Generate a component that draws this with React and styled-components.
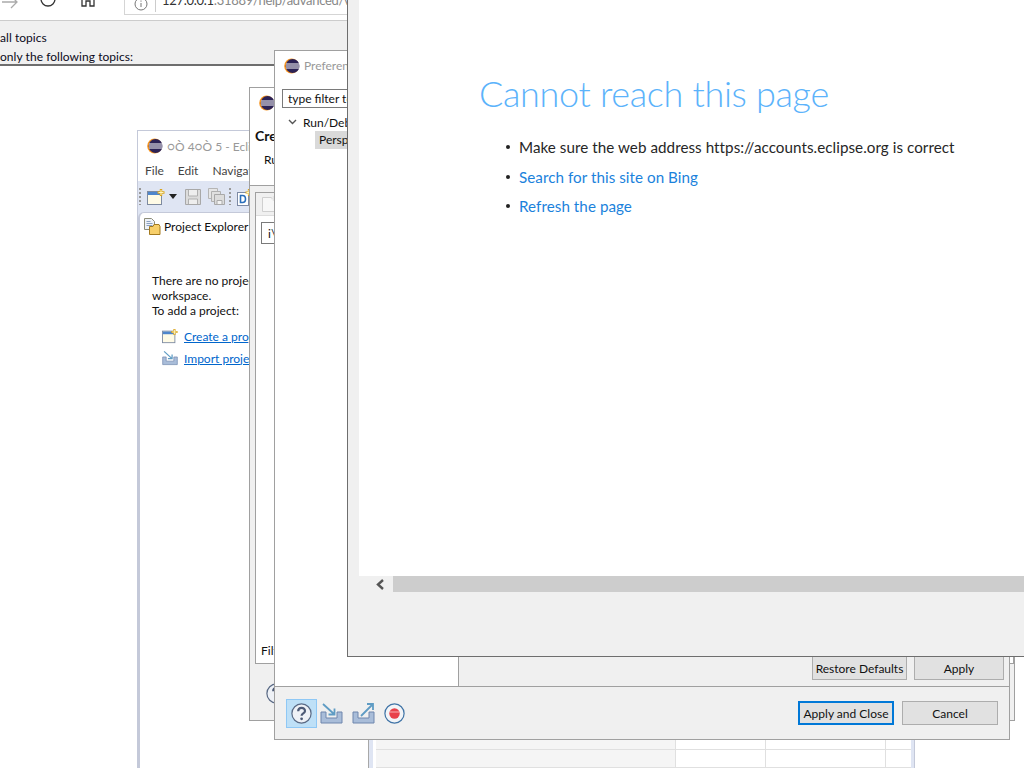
import React from "react";
import styled, { createGlobalStyle } from "styled-components";

const Global = createGlobalStyle`
  html, body { margin: 0; padding: 0; background: #fff; }
  body { font-family: "Lato", "Liberation Sans", sans-serif; font-size: 12px; color: #111; }
  * { box-sizing: border-box; }
`;

const Desktop = styled.div`
  position: relative;
  width: 1024px;
  height: 768px;
  overflow: hidden;
  background: #fff;
`;

const Window = styled.div`
  position: absolute;
  left: ${(p) => p.$x}px;
  top: ${(p) => p.$y}px;
  width: ${(p) => p.$w}px;
  height: ${(p) => p.$h}px;
  display: flex;
  flex-direction: column;
  overflow: hidden;
  background: ${(p) => p.$bg || "#fff"};
  border: 1px solid ${(p) => p.$border || "#a0a0a0"};
`;

/* Browser */
const BrowserWindow = styled(Window)`
  border: none;
`;
const BrowserBar = styled.div`
  height: 21px;
  flex: none;
  display: flex;
  align-items: flex-end;
  background: #fff;
  border-bottom: 1px solid #ccc;
  position: relative;
  padding-left: 124px;
`;
const NavIcon = styled.svg`
  position: absolute;
  left: ${(p) => p.$x}px;
  top: -9px;
`;
const UrlBox = styled.div`
  width: 240px;
  height: 26px;
  margin-bottom: 5px;
  border: 1px solid #d5d5d5;
  display: flex;
  align-items: flex-end;
  flex: none;
  background: #fff;
  white-space: pre;
  padding: 0 0 6px 37px;
  font-size: 13px;
  letter-spacing: -0.3px;
  color: #888;
  position: relative;
`;
const UrlSep = styled.span`
  position: absolute;
  left: 30px;
  bottom: 2px;
  height: 22px;
  width: 1px;
  background: #ccc;
`;
const UrlInfo = styled.svg`
  position: absolute;
  left: 9px;
  bottom: 3px;
`;
const UrlHost = styled.span`
  color: #333;
`;
const TopicBand = styled.div`
  height: 45px;
  flex: none;
  background: #f0f0f0;
  border-bottom: 2px solid #6e6e6e;
  display: flex;
  flex-direction: column;
  padding: 9px 0 0 0;
  gap: 4px;
  line-height: 15px;
  font-size: 12px;
  letter-spacing: 0.05px;
  color: #0b0b20;
`;

/* Eclipse */
const TitleBar = styled.div`
  height: ${(p) => p.$h || 30}px;
  flex: none;
  display: flex;
  align-items: center;
  gap: 4px;
  padding-left: 9px;
  background: #fff;
  color: #999;
  white-space: nowrap;
  font-size: 12px;
`;
const MenuBar = styled.div`
  height: 20px;
  flex: none;
  display: flex;
  gap: 14px;
  align-items: center;
  padding: 0 0 2px 7px;
  color: #444;
  font-size: 12px;
  background: #fff;
`;
const ToolBar = styled.div`
  height: 31px;
  flex: none;
  background: #dfe5f3;
  display: flex;
  align-items: center;
  padding-left: 1px;
`;
const ToolSlot = styled.span`
  display: flex;
  align-items: center;
  margin-right: ${(p) => p.$mr}px;
`;
const Grip = styled.span`
  width: 2px;
  height: 17px;
  background: repeating-linear-gradient(#999 0 2px, transparent 2px 4px);
`;
const EclipseBody = styled.div`
  flex: 1;
  display: flex;
  background: #dfe5f3;
  padding-right: 3px;
`;
const Explorer = styled.div`
  width: 231px;
  flex: none;
  background: #fff;
  border-left: 2px solid #c4c9d9;
  border-top: 1px solid #c4c9d9;
  border-right: 1px solid #a8a8a8;
  border-top-left-radius: 6px;
  display: flex;
  flex-direction: column;
`;
const ExplorerTab = styled.div`
  display: flex;
  align-items: center;
  gap: 3px;
  height: 28px;
  padding: 0 0 2px 4px;
  color: #111;
  white-space: nowrap;
`;
const ExplorerText = styled.div`
  margin: 32px 0 0 12px;
  line-height: 15px;
  color: #111;
  white-space: nowrap;
`;
const LinkRow = styled.div`
  display: flex;
  align-items: center;
  gap: 6px;
  height: 22px;
  padding-left: 22px;
  white-space: nowrap;
  color: #0066cc;
  text-decoration: underline;
`;
const Links = styled.div`
  margin-top: 7px;
`;
const Workbench = styled.div`
  flex: 1;
  background: #fff;
  margin: 0 0 0 4px;
  padding: 0 0 0 3px;
  display: flex;
  flex-direction: column;
  justify-content: flex-end;
`;
const SheetRow = styled.div`
  height: 18px;
  display: grid;
  grid-template-columns: 300px 90px 120px 1fr;
  border-top: 1px solid #e0e0e0;
`;
const SheetCell = styled.span`
  border-right: 1px solid #e0e0e0;
  background: ${(p) => (p.$shade ? "#f5f5f5" : "transparent")};
`;

/* Create dialog */
const CreateHead = styled.div`
  height: 68px;
  flex: none;
  background: #fff;
  padding: 10px 0 0 5px;
  border-bottom: 1px solid #a0a0a0;
`;
const CreateTitle = styled.div`
  font-weight: 700;
  font-size: 14px;
  line-height: 16px;
`;
const CreateSub = styled.div`
  margin: 8px 0 0 9px;
  line-height: 15px;
`;
const CreateBody = styled.div`
  flex: 1;
  background: #f0f0f0;
  padding: 6px 0 0 5px;
  display: flex;
  flex-direction: column;
`;
const CreatePanel = styled.div`
  height: 472px;
  flex: none;
  background: #fff;
  border: 1px solid #a0a0a0;
  display: flex;
  flex-direction: column;
`;
const CreateTools = styled.div`
  height: 23px;
  flex: none;
  background: #f0f0f0;
  border-bottom: 1px solid #ddd;
  display: flex;
  align-items: center;
  padding-left: 6px;
`;
const CreateInput = styled.div`
  margin: 6px 0 0 5px;
  width: 200px;
  height: 22px;
  border: 1px solid #7a7a7a;
  padding: 3px 0 0 6px;
  line-height: 15px;
`;
const FilterLabel = styled.div`
  margin: auto 0 5px 5px;
  line-height: 15px;
`;
const CreateFoot = styled.div`
  flex: 1;
  padding: 19px 0 0 11px;
`;

/* Preferences */
const PrefMain = styled.div`
  flex: 1;
  display: flex;
  background: #fff;
`;
const PrefSide = styled.div`
  width: 184px;
  flex: none;
  background: #fff;
  border-right: 1px solid #a0a0a0;
  padding: 9px 0 0 7px;
  display: flex;
  flex-direction: column;
`;
const FilterInput = styled.div`
  width: 170px;
  height: 19px;
  border: 1px solid #7a7a7a;
  padding-left: 5px;
  line-height: 17px;
  white-space: nowrap;
  flex: none;
`;
const TreeRow = styled.div`
  display: flex;
  align-items: center;
  gap: 6px;
  height: 18px;
  margin-top: 5px;
  padding-left: 6px;
  white-space: nowrap;
`;
const TreeChild = styled.div`
  height: 18px;
  margin: 0 0 0 33px;
  background: #d9d9d9;
  padding-left: 4px;
  line-height: 18px;
  white-space: nowrap;
`;
const PrefContent = styled.div`
  flex: 1;
  background: #f0f0f0;
  display: flex;
  justify-content: flex-end;
  align-items: flex-end;
  gap: 7px;
  padding: 0 5px 6px 0;
`;
const FlatButton = styled.button`
  font: inherit;
  font-size: 12px;
  height: 24px;
  width: ${(p) => p.$w}px;
  padding: 0;
  background: #e1e1e1;
  color: #111;
  border: ${(p) => (p.$primary ? "2px solid #0078d7" : "1px solid #adadad")};
`;
const PrefFoot = styled.div`
  height: 53px;
  flex: none;
  background: #f0f0f0;
  border-top: 1px solid #a0a0a0;
  display: flex;
  align-items: center;
  padding: 0 11px 0 11px;
`;
const HelpButton = styled.div`
  width: 31px;
  height: 29px;
  background: #bee0f7;
  border: 1px solid #8fc8f5;
  display: flex;
  align-items: center;
  justify-content: center;
  flex: none;
`;
const FootIcons = styled.div`
  display: flex;
  align-items: center;
  gap: 9px;
  margin-left: 3px;
`;
const FootButtons = styled.div`
  margin-left: auto;
  display: flex;
  gap: 8px;
`;

/* Web dialog */
const WebWindow = styled(Window)`
  border: 1px solid #6e6e6e;
  padding: 0 0 0 11px;
`;
const WebPage = styled.div`
  height: 576px;
  flex: none;
  background: #fff;
  padding: 69px 0 0 120px;
`;
const Heading = styled.h1`
  margin: 0;
  font-size: 36px;
  font-weight: 300;
  line-height: 48px;
  letter-spacing: -0.33px;
  color: #5cb3fb;
  white-space: nowrap;
`;
const IssueList = styled.ul`
  list-style: none;
  margin: 19px 0 0;
  padding: 0 0 0 40px;
  font-size: 15.2px;
  line-height: 22px;
  letter-spacing: 0.05px;
  display: flex;
  flex-direction: column;
  gap: 7.5px;
`;
const Issue = styled.li`
  position: relative;
  white-space: nowrap;
  color: ${(p) => (p.$link ? "#1b82dc" : "#262626")};
  &::before {
    content: "";
    position: absolute;
    left: -13px;
    top: 9px;
    width: 4px;
    height: 4px;
    border-radius: 50%;
    background: #222;
  }
`;
const ScrollBar = styled.div`
  height: 16px;
  flex: none;
  display: flex;
  align-items: stretch;
`;
const ScrollArrow = styled.div`
  width: 34px;
  flex: none;
  display: flex;
  align-items: center;
  justify-content: flex-end;
  padding-right: 8px;
`;
const ScrollThumb = styled.div`
  flex: 1;
  background: #cdcdcd;
`;

const Logo = ({ s = 16 }) => (
  <svg width={s} height={s} viewBox="0 0 16 16">
    <circle cx="7.6" cy="8" r="7.4" fill="#f7941e" />
    <circle cx="8.6" cy="8" r="6.9" fill="#2c2255" />
    <path d="M2 6h13M2 8h13.4M2 10h13" stroke="#fff" strokeWidth="1" />
  </svg>
);
const NewProject = ({ s = 18 }) => (
  <svg width={s} height={s} viewBox="0 0 18 18">
    <rect x="0.5" y="3.5" width="14" height="13" fill="#fffbe6" stroke="#7d8aa0" />
    <rect x="1" y="4" width="13" height="3" fill="#4f86cc" />
    <path d="M14 1v7M10.5 4.5h7" stroke="#d9a520" strokeWidth="2.4" />
    <path d="M14 2v5M11.5 4.5h5" stroke="#fff5c0" strokeWidth="1" />
  </svg>
);
const Floppy = () => (
  <svg width="16" height="17" viewBox="0 0 16 17">
    <path d="M.5 1.5h15v15H.5z" fill="#dcdcdc" stroke="#a8a8a8" />
    <path d="M3.5 2v6h9V2M3.5 16v-5h9v5" fill="#eee" stroke="#b0b0b0" />
  </svg>
);
const FloppyAll = () => (
  <svg width="17" height="17" viewBox="0 0 17 17">
    <path d="M.5.5h9v10h-9z" fill="#e6e6e6" stroke="#b5b5b5" />
    <path d="M3.5 3.5h9v10h-9z" fill="#e0e0e0" stroke="#b0b0b0" />
    <path d="M6.5 6.5h10v10h-10z" fill="#dcdcdc" stroke="#a8a8a8" />
    <path d="M9 12.5h5v4H9z" fill="#f2f2f2" stroke="#aaa" />
  </svg>
);
const NewType = () => (
  <svg width="18" height="18" viewBox="0 0 18 18">
    <rect x="0.5" y="4.5" width="11" height="13" fill="#fff" stroke="#7d8aa5" />
    <path d="M3.5 7.5v7h2c4 0 4-7 0-7z" fill="none" stroke="#2a6ebb" strokeWidth="1.6" />
    <path d="M12 1v7M8.5 4.5h7" stroke="#d9a520" strokeWidth="2.2" />
    <path d="M12 2v5M9.5 4.5h5" stroke="#fff5c0" strokeWidth="1" />
  </svg>
);
const Folder = () => (
  <svg width="17" height="17" viewBox="0 0 17 17">
    <path d="M.5.5h7l3 3v8H.5z" fill="#eef2f8" stroke="#8d8d7a" />
    <path d="M2.5 3.5h4M2.5 5.5h6M2.5 7.5h6" stroke="#8aa0c0" />
    <path d="M5.5 8.5h3.5l1-2h5l1 2v8h-10.500z" fill="#f7cf6a" stroke="#a37a1f" />
  </svg>
);
const TrayIn = ({ w = 23 }) => (
  <svg width={w} height={w} viewBox="0 0 23 23">
    <path d="M1 10v11h21V10h-5v6H6v-6z" fill="#a9bdd9" stroke="#6f86ad" />
    <path d="M3 2l11 10M14.500 6.500v6h-6" fill="none" stroke="#5f9cc4" strokeWidth="1.8" />
  </svg>
);
const TrayOut = ({ w = 23 }) => (
  <svg width={w} height={w} viewBox="0 0 23 23">
    <path d="M1 10v11h21V10h-5v6H6v-6z" fill="#a9bdd9" stroke="#6f86ad" />
    <path d="M9 14L21 2M15 2h6v6" fill="none" stroke="#5f9cc4" strokeWidth="1.8" />
  </svg>
);
const Help = ({ s = 21 }) => (
  <svg width={s} height={s} viewBox="0 0 21 21">
    <circle cx="10.500" cy="10.500" r="9.600" fill="#eef1f6" stroke="#5a6a85" strokeWidth="1.200" />
    <path d="M7.200 8.200c0-4.400 6.800-4.400 6.800-.2 0 2.500-3.400 2.400-3.400 4.800" fill="none" stroke="#4d5a76" strokeWidth="2.200" />
    <circle cx="10.600" cy="15.800" r="1.400" fill="#4d5a76" />
  </svg>
);
const Record = () => (
  <svg width="21" height="21" viewBox="0 0 21 21">
    <circle cx="10.500" cy="10.500" r="9.600" fill="#f2f4f7" stroke="#3f73a6" strokeWidth="1.200" />
    <circle cx="10.500" cy="10.500" r="5.200" fill="#e8414a" />
    <path d="M6 9h9" stroke="#f58b90" strokeWidth="1.500" />
  </svg>
);

const rows = [0, 1, 2];

export default function App() {
  return (
    <Desktop>
      <Global />
      <BrowserWindow $x={0} $y={0} $w={347} $h={300}>
        <BrowserBar>
          <NavIcon $x={0} width="20" height="24" viewBox="0 0 20 24">
            <path d="M2 11h15M11 5l6 6-6 6" fill="none" stroke="#aaa" strokeWidth="1.300" />
          </NavIcon>
          <NavIcon $x={38} width="20" height="24" viewBox="0 0 20 24">
            <circle cx="10" cy="8" r="7" fill="none" stroke="#333" strokeWidth="1.300" />
          </NavIcon>
          <NavIcon $x={78} width="20" height="24" viewBox="0 0 20 24">
            <path d="M2 8l8-7 8 7M4 6v9h4v-5h4v5h4V6" fill="none" stroke="#333" strokeWidth="1.300" />
          </NavIcon>
          <UrlBox>
            <UrlSep />
            <UrlInfo width="14" height="14" viewBox="0 0 14 14">
              <circle cx="7" cy="7" r="6" fill="none" stroke="#777" />
              <path d="M7 6v4M7 3.500v1.200" stroke="#777" />
            </UrlInfo>
            <UrlHost>127.0.0.1</UrlHost>:31889/help/advanced/v
          </UrlBox>
        </BrowserBar>
        <TopicBand>
          <span>all topics</span>
          <span>only the following topics:</span>
        </TopicBand>
      </BrowserWindow>

      <Window $x={137} $y={130} $w={778} $h={656} $border="#c4c9d9">
        <TitleBar>
          <Logo />
          <span>○Ò 4○Ò 5 - Eclipse</span>
        </TitleBar>
        <MenuBar>
          <span>File</span>
          <span>Edit</span>
          <span>Navigate</span>
        </MenuBar>
        <ToolBar>
          <ToolSlot $mr={6}><Grip /></ToolSlot>
          <ToolSlot $mr={4}><NewProject /></ToolSlot>
          <ToolSlot $mr={8}>
            <svg width="8" height="5" viewBox="0 0 8 5"><path d="M0 0h8L4 5z" fill="#222" /></svg>
          </ToolSlot>
          <ToolSlot $mr={7}><Floppy /></ToolSlot>
          <ToolSlot $mr={4}><FloppyAll /></ToolSlot>
          <ToolSlot $mr={6}><Grip /></ToolSlot>
          <ToolSlot $mr={0}><NewType /></ToolSlot>
        </ToolBar>
        <EclipseBody>
          <Explorer>
            <ExplorerTab>
              <Folder />
              <span>Project Explorer</span>
            </ExplorerTab>
            <ExplorerText>
              There are no projects in your
              <br />
              workspace.
              <br />
              To add a project:
            </ExplorerText>
            <Links>
              <LinkRow>
                <NewProject s={16} />
                <span>Create a project...</span>
              </LinkRow>
              <LinkRow>
                <TrayIn w={16} />
                <span>Import projects...</span>
              </LinkRow>
            </Links>
          </Explorer>
          <Workbench>
            {rows.map((r) => (
              <SheetRow key={r}>
                <SheetCell $shade />
                <SheetCell />
                <SheetCell />
                <span />
              </SheetRow>
            ))}
          </Workbench>
        </EclipseBody>
      </Window>

      <Window $x={249} $y={87} $w={766} $h={634}>
        <TitleBar $h={30}>
          <Logo />
          <span>Create</span>
        </TitleBar>
        <CreateHead>
          <CreateTitle>Create</CreateTitle>
          <CreateSub>Run</CreateSub>
        </CreateHead>
        <CreateBody>
          <CreatePanel>
            <CreateTools>
              <svg width="15" height="16" viewBox="0 0 15 16">
                <path d="M.5 1.500h9l3 3v11H.5z" fill="#f7f7f7" stroke="#cfcfcf" />
                <path d="M11.500 0v5M9 2.500h5" stroke="#e3e3e3" strokeWidth="1.500" />
              </svg>
            </CreateTools>
            <CreateInput>i\</CreateInput>
            <FilterLabel>Filter</FilterLabel>
          </CreatePanel>
          <CreateFoot>
            <Help s={21} />
          </CreateFoot>
        </CreateBody>
      </Window>

      <Window $x={274} $y={50} $w={736} $h={690}>
        <TitleBar $h={29}>
          <Logo />
          <span>Preferences</span>
        </TitleBar>
        <PrefMain>
          <PrefSide>
            <FilterInput>type filter text</FilterInput>
            <TreeRow>
              <svg width="9" height="6" viewBox="0 0 9 6"><path d="M1 1l3.500 3.500L8 1" fill="none" stroke="#555" strokeWidth="1.400" /></svg>
              <span>Run/Debug</span>
            </TreeRow>
            <TreeChild>Perspectives</TreeChild>
          </PrefSide>
          <PrefContent>
            <FlatButton $w={95}>Restore Defaults</FlatButton>
            <FlatButton $w={90}>Apply</FlatButton>
          </PrefContent>
        </PrefMain>
        <PrefFoot>
          <HelpButton><Help /></HelpButton>
          <FootIcons>
            <TrayIn />
            <TrayOut />
            <Record />
          </FootIcons>
          <FootButtons>
            <FlatButton $w={96} $primary>Apply and Close</FlatButton>
            <FlatButton $w={96}>Cancel</FlatButton>
          </FootButtons>
        </PrefFoot>
      </Window>

      <WebWindow $x={347} $y={-1} $w={690} $h={658} $bg="#f0f0f0">
        <WebPage>
          <Heading>Cannot reach this page</Heading>
          <IssueList>
            <Issue>Make sure the web address https://accounts.eclipse.org is correct</Issue>
            <Issue $link>Search for this site on Bing</Issue>
            <Issue $link>Refresh the page</Issue>
          </IssueList>
        </WebPage>
        <ScrollBar>
          <ScrollArrow>
            <svg width="10" height="11" viewBox="0 0 10 11"><path d="M8 1L3 5.500 8 10" fill="none" stroke="#555" strokeWidth="2.400" /></svg>
          </ScrollArrow>
          <ScrollThumb />
        </ScrollBar>
      </WebWindow>
    </Desktop>
  );
}
